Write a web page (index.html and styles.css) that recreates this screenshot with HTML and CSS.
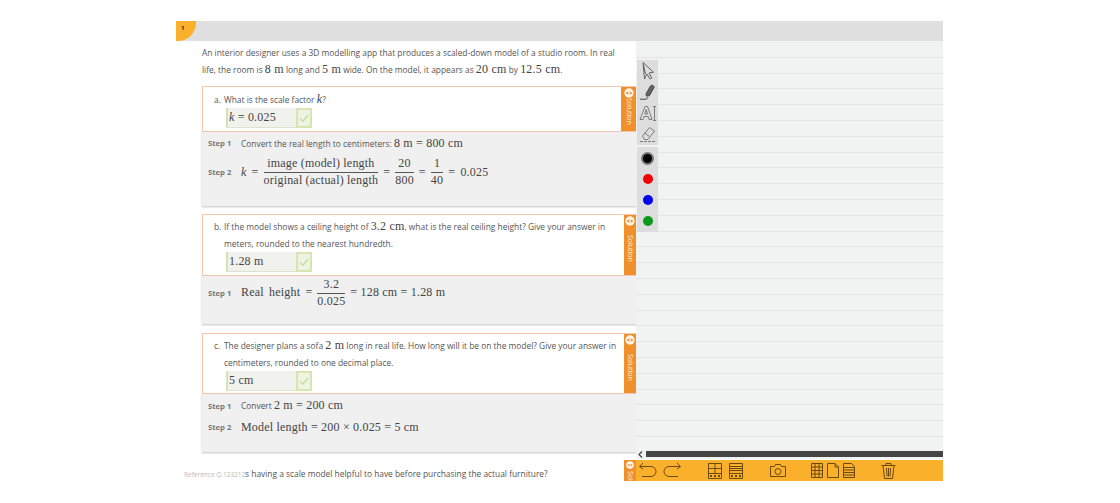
FILE: index.html
```html
<!DOCTYPE html>
<html lang="en">

<head>
    <meta charset="UTF-8">
    <meta name="viewport" content="width=device-width, initial-scale=1.0">
    <title>Scale factor question</title>
    <link rel="stylesheet" href="styles.css">
</head>

<body>
    <svg class="defs" width="0" height="0">
        <symbol id="eye" viewBox="0 0 12 12">
            <circle cx="6" cy="6" r="5.6" fill="#fff" opacity="0.9" />
            <path d="M2 6c1.600-2.200 6.400-2.200 8 0-1.600 2.200-6.400 2.200-8 0z" fill="#f0902a" />
            <circle cx="6" cy="6" r="1.200" fill="#fff" />
        </symbol>
        <symbol id="check" viewBox="0 0 12 12">
            <path d="M2 6.500l2.800 2.600L10.200 3" fill="none" stroke="#c3dc96" stroke-width="1.200" />
        </symbol>
    </svg>

    <div class="app">
        <div class="top-bar">
            <div class="badge">1</div>
        </div>

        <div class="columns">
            <div class="questions">
                <p class="intro">An interior designer uses a 3D modelling app that produces a scaled-down model of a studio room. In real<br>life, the room is <span class="m">8 m</span> long and <span class="m">5 m</span> wide. On the model, it appears as <span class="m">20 cm</span> by <span class="m">12.5 cm</span>.</p>

                <div class="part part-a">
                    <div class="part-body">
                        <p class="ask"><span class="ask-tag">a.</span>What is the scale factor <i class="m">k</i>?</p>
                        <div class="answer">
                            <span class="m answer-val"><i>k</i> = 0.025</span>
                            <span class="tick"><svg width="12" height="12"><use href="#check" /></svg></span>
                        </div>
                    </div>
                    <div class="sol-tab sol-wide">
                        <svg width="10" height="10"><use href="#eye" /></svg>
                        <span>Solution</span>
                    </div>
                </div>
                <div class="steps steps-a">
                    <div class="step step-one">
                        <span class="step-label">Step 1</span>
                        <span>Convert the real length to centimeters: <span class="m">8 m = 800 cm</span></span>
                    </div>
                    <div class="step step-two">
                        <span class="step-label">Step 2</span>
                        <span class="m eq">
                            <i>k</i><span>=</span>
                            <span class="frac"><span>image (model) length</span><span>original (actual) length</span></span>
                            <span>=</span>
                            <span class="frac"><span>20</span><span>800</span></span>
                            <span>=</span>
                            <span class="frac"><span>1</span><span>40</span></span>
                            <span class="eq-end">= 0.025</span>
                        </span>
                    </div>
                </div>

                <div class="part part-b">
                    <div class="part-body">
                        <p class="ask"><span class="ask-tag">b.</span>If the model shows a ceiling height of <span class="m">3.2 cm</span>, what is the real ceiling height? Give your answer in<br>meters, rounded to the nearest hundredth.</p>
                        <div class="answer">
                            <span class="m answer-val">1.28 m</span>
                            <span class="tick"><svg width="12" height="12"><use href="#check" /></svg></span>
                        </div>
                    </div>
                    <div class="sol-tab">
                        <svg width="10" height="10"><use href="#eye" /></svg>
                        <span>Solution</span>
                    </div>
                </div>
                <div class="steps steps-b">
                    <div class="step">
                        <span class="step-label">Step 1</span>
                        <span class="m eq">
                            <span class="eq-end">Real height =</span>
                            <span class="frac"><span>3.2</span><span>0.025</span></span>
                            <span>= 128 cm = 1.28 m</span>
                        </span>
                    </div>
                </div>

                <div class="part part-c">
                    <div class="part-body">
                        <p class="ask"><span class="ask-tag">c.</span>The designer plans a sofa <span class="m">2 m</span> long in real life. How long will it be on the model? Give your answer in<br>centimeters, rounded to one decimal place.</p>
                        <div class="answer">
                            <span class="m answer-val">5 cm</span>
                            <span class="tick"><svg width="12" height="12"><use href="#check" /></svg></span>
                        </div>
                    </div>
                    <div class="sol-tab">
                        <svg width="10" height="10"><use href="#eye" /></svg>
                        <span>Solution</span>
                    </div>
                </div>
                <div class="steps steps-c">
                    <div class="step step-c1">
                        <span class="step-label">Step 1</span>
                        <span>Convert <span class="m">2 m = 200 cm</span></span>
                    </div>
                    <div class="step step-c2">
                        <span class="step-label">Step 2</span>
                        <span class="m eq">Model length = 200 × 0.025 = 5 cm</span>
                    </div>
                </div>

                <div class="part-last">
                    <p class="last-text">is having a scale model helpful to have before purchasing the actual furniture?</p>
                    <div class="sol-tab sol-cut">
                        <svg width="10" height="10"><use href="#eye" /></svg>
                        <span>Sol</span>
                    </div>
                </div>
                <div class="reference">Reference Q.123212</div>
            </div>

            <div class="board">
                <div class="paper">
                    <div class="palette palette-tools">
                        <svg width="18" height="18" viewBox="0 0 18 18" fill="none" stroke="#555" stroke-width="0.9">
                            <path d="M4 .5l1.500 16.500 2.500-5 3 5 1.800-1-2.800-5 4.500-.8z" />
                            <path d="M4.500 3l2 9" />
                        </svg>
                        <svg width="18" height="18" viewBox="0 0 18 18" fill="none" stroke="#444">
                            <path d="M7 11l4.500-8c1-1.600 3.800-.6 3.500 1.400l-4.500 8.200-3 .6z" fill="#666" />
                            <path d="M1 16.200h6.500l1.500-2" stroke-width="1" />
                        </svg>
                        <svg width="18" height="18" viewBox="0 0 18 18" fill="none" stroke="#666" stroke-width="0.8">
                            <path d="M1 15.500L6 2.500h2.600l4.400 13h-3l-.8-3H5l-1 3zM5.800 10h2.700L7.200 5.500z" />
                            <path d="M14 2.500h3M15.500 2.500v14M14 16.500h3" />
                        </svg>
                        <svg width="18" height="18" viewBox="0 0 18 18" fill="none" stroke="#666" stroke-width="0.8">
                            <path d="M3.500 11L10.500 2.500l5 3.500-6.500 8.500H5.500z" />
                            <path d="M5.500 8l5 3.500" />
                            <path d="M1 16.500h15" stroke-dasharray="3 1" />
                        </svg>
                    </div>
                    <div class="palette palette-colors">
                        <span class="dot dot-black"></span>
                        <span class="dot dot-red"></span>
                        <span class="dot dot-blue"></span>
                        <span class="dot dot-green"></span>
                    </div>
                </div>

                <div class="scroll-row">
                    <svg width="5" height="7" viewBox="0 0 5 7" fill="none" stroke="#444" stroke-width="1.200">
                        <path d="M4 .5L1 3.500 4 6.500" />
                    </svg>
                    <div class="scroll-bar"></div>
                </div>

                <div class="toolbar">
                    <svg class="t-undo" width="20" height="17" viewBox="0 0 20 17" fill="none" stroke="#6b4a12">
                        <path d="M5 1L1.500 4.500 5 7M1.500 4.500h11.500a4.500 4.500 0 0 1 0 10H4" />
                    </svg>
                    <svg class="t-redo" width="20" height="17" viewBox="0 0 20 17" fill="none" stroke="#6b4a12">
                        <path d="M15 1l3.500 3.500L15 7M18.500 4.500H7a4.500 4.500 0 0 0 0 10h9" />
                    </svg>
                    <svg class="t-grid1" width="14" height="16" viewBox="0 0 14 16" fill="none" stroke="#6b4a12">
                        <path d="M.5.500h13v15H.5zM.5 10.500h13M.5 5.500h13M7 .5v10" />
                        <path d="M2 13h2M6 13h2M10 13h2" stroke-width="2" />
                    </svg>
                    <svg class="t-grid2" width="14" height="16" viewBox="0 0 14 16" fill="none" stroke="#6b4a12">
                        <path d="M.5.500h13v15H.5zM.5 10.500h13M.5 3.500h13M.5 5.500h13M.5 7.500h13" />
                        <path d="M2 13h2M6 13h2M10 13h2" stroke-width="2" />
                    </svg>
                    <svg class="t-camera" width="16" height="13" viewBox="0 0 16 13" fill="none" stroke="#6b4a12">
                        <path d="M.5 2.500h4l1-2h5l1 2h4v10H.5z" />
                        <circle cx="8" cy="7.500" r="3" />
                    </svg>
                    <svg class="t-table" width="12" height="15" viewBox="0 0 12 15" fill="none" stroke="#6b4a12">
                        <path d="M.5.500h11v14H.5zM4 .5v14M8 .5v14M.5 4h11M.5 7.500h11M.5 11h11" />
                    </svg>
                    <svg class="t-doc" width="12" height="15" viewBox="0 0 12 15" fill="none" stroke="#6b4a12">
                        <path d="M.5.500h7.500l3.500 3.500v10.500H.5zM8 .5V4h3.500" />
                    </svg>
                    <svg class="t-lines" width="12" height="15" viewBox="0 0 12 15" fill="none" stroke="#6b4a12">
                        <path d="M.5.500h8l3 3v11H.5zM.5 4.500h11M.5 7h11M.5 9.500h11M.5 12h11" />
                    </svg>
                    <svg class="t-trash" width="15" height="17" viewBox="0 0 15 17" fill="none" stroke="#6b4a12">
                        <path d="M.5 3.500h14M5 3.500V1.500h5v2M2 3.500l1.500 13h8l1.500-13M5.500 6l.5 8.500M7.500 6v8.500M9.500 6L9 14.500" />
                    </svg>
                </div>
            </div>
        </div>
    </div>
</body>

</html>
```

FILE: styles.css
```css
body,
html {
    margin: 0;
    padding: 0;
    background-color: white;
    font-family: "Open Sans", "Liberation Sans", sans-serif;
    height: 100%;
    overflow: hidden;
}

.defs {
    position: absolute;
}

.app {
    margin: 21px 0 0 176px;
    width: 767px;
    height: 460px;
    overflow: hidden;
    color: #555;
    font-size: 8.400px;
}

.top-bar {
    height: 20px;
    background-color: #dfdfdf;
}

.badge {
    width: 20px;
    height: 20px;
    background-color: #fbb02c;
    border-bottom-right-radius: 18px;
    box-sizing: border-box;
    padding: 3px 0 0 5px;
    font-size: 6px;
    font-weight: bold;
    color: #333;
}

.columns {
    display: flex;
    height: 440px;
}

.questions {
    position: relative;
    width: 460px;
    padding-left: 26px;
    box-sizing: border-box;
    overflow: hidden;
}

.m {
    font-family: "Liberation Serif", serif;
    font-size: 12px;
    color: #444;
    letter-spacing: 0.2px;
}

.intro {
    margin: 0;
    height: 42px;
    line-height: 17px;
    padding-top: 3px;
    width: 430px;
    white-space: nowrap;
}

.part {
    display: flex;
    height: 46px;
    box-sizing: border-box;
    border: 1px solid #f3c9b4;
    border-right: none;
}

.part-b {
    margin-top: 8px;
    height: 62px;
}

.part-c {
    margin-top: 9px;
    height: 61px;
}

.part-body {
    flex: 1;
    min-width: 0;
    padding: 3px 0 0 11px;
}

.part-a .part-body {
    padding-top: 4px;
}

.ask {
    margin: 0;
    line-height: 17px;
    padding-left: 10px;
    text-indent: -10px;
    white-space: nowrap;
}

.ask-tag {
    display: inline-block;
    width: 10px;
    text-indent: 0;
}

.answer {
    display: flex;
    align-items: center;
    justify-content: space-between;
    margin-left: 12px;
    width: 86px;
    height: 20px;
    box-sizing: border-box;
    background-color: #f1f1ee;
    border-left: 2px solid #d3e4b5;
    border-bottom: 1px solid #dde3cf;
}

.answer-val {
    padding-left: 1px;
}

.tick {
    display: flex;
    align-items: center;
    justify-content: center;
    width: 16px;
    height: 20px;
    box-sizing: border-box;
    border: 2px solid #d5e6b0;
    background-color: #eef3e2;
}

.sol-tab {
    display: flex;
    flex-direction: column;
    align-items: center;
    flex-shrink: 0;
    width: 12px;
    background-color: #f0902a;
    color: #fff;
    font-size: 7px;
    padding-top: 1px;
    box-sizing: border-box;
}

.sol-tab span {
    writing-mode: vertical-rl;
    margin-top: 9px;
    line-height: 10px;
    opacity: 0.85;
}

.sol-wide {
    width: 15px;
}

.sol-wide span {
    margin-top: 0;
}

.sol-cut {
    height: 21px;
    overflow: hidden;
}

.sol-cut span {
    margin-top: 2px;
}

.steps {
    background-color: #f0f0f0;
    box-shadow: 0 1px 2px rgba(0, 0, 0, 0.25);
    padding-left: 6px;
    box-sizing: border-box;
}

.steps-a {
    height: 74px;
}

.steps-b {
    height: 48px;
}

.steps-c {
    height: 58px;
}

.step {
    display: flex;
    align-items: center;
}

.step-label {
    width: 33px;
    flex-shrink: 0;
    font-size: 7.700px;
    font-weight: 700;
    color: #777;
}

.step-one {
    height: 22px;
}

.step-two {
    height: 36px;
}

.steps-b .step {
    height: 33px;
}

.step-c1 {
    height: 23px;
}

.step-c2 {
    height: 20px;
}

.eq {
    display: inline-flex;
    align-items: center;
    gap: 5px;
    white-space: nowrap;
}

.eq-end {
    word-spacing: 2px;
}

.frac {
    display: inline-flex;
    flex-direction: column;
    align-items: center;
    line-height: 15px;
}

.frac span:first-child {
    border-bottom: 1px solid #555;
    align-self: stretch;
    text-align: center;
    padding: 0 1px 1px;
}

.part-last {
    display: flex;
    justify-content: space-between;
    margin-top: 8px;
    height: 21px;
}

.last-text {
    margin: 0;
    padding: 6px 0 0 41px;
    line-height: 15px;
    white-space: nowrap;
}

.reference {
    position: absolute;
    left: 8px;
    top: 429px;
    font-size: 6.500px;
    color: #bbb;
    background-color: white;
}

.board {
    display: flex;
    flex-direction: column;
    width: 307px;
}

.paper {
    position: relative;
    flex: 1;
    background-color: #f1f2f2;
    background-image: repeating-linear-gradient(to bottom, transparent 0, transparent 14.800px, #e1e5e3 14.800px, #e1e5e3 15.800px);
    background-position: 0 1px;
}

.palette {
    position: absolute;
    left: 1px;
    width: 21px;
    display: flex;
    flex-direction: column;
    align-items: center;
    background-color: #dddddd;
}

.palette-tools {
    top: 19px;
    height: 85px;
    justify-content: space-around;
    padding: 1px 0;
    box-sizing: border-box;
}

.palette-colors {
    top: 106px;
    height: 85px;
    gap: 11px;
    padding-top: 6px;
    box-sizing: border-box;
}

.dot {
    width: 10px;
    height: 10px;
    border-radius: 50%;
}

.dot-black {
    background-color: black;
    box-shadow: 0 0 0 2px #777;
    width: 9px;
    height: 9px;
    margin-top: 1px;
}

.dot-red {
    background-color: #f00000;
}

.dot-blue {
    background-color: #0000f0;
}

.dot-green {
    background-color: #0a9a1a;
}

.scroll-row {
    display: flex;
    align-items: center;
    height: 8px;
    padding: 0 0 1px 2px;
    gap: 3px;
    background-color: #f1f2f2;
}

.scroll-bar {
    flex: 1;
    height: 6px;
    background-color: #454545;
}

.toolbar {
    display: flex;
    align-items: center;
    height: 21px;
    margin-top: 1px;
    background-color: #fbb02c;
    padding-left: 2px;
}

.t-redo {
    margin-left: 4px;
}

.t-grid1 {
    margin-left: 26px;
}

.t-grid2 {
    margin-left: 7px;
}

.t-camera {
    margin-left: 27px;
}

.t-table {
    margin-left: 25px;
}

.t-doc,
.t-lines {
    margin-left: 4px;
}

.t-trash {
    margin-left: 26px;
}
```
